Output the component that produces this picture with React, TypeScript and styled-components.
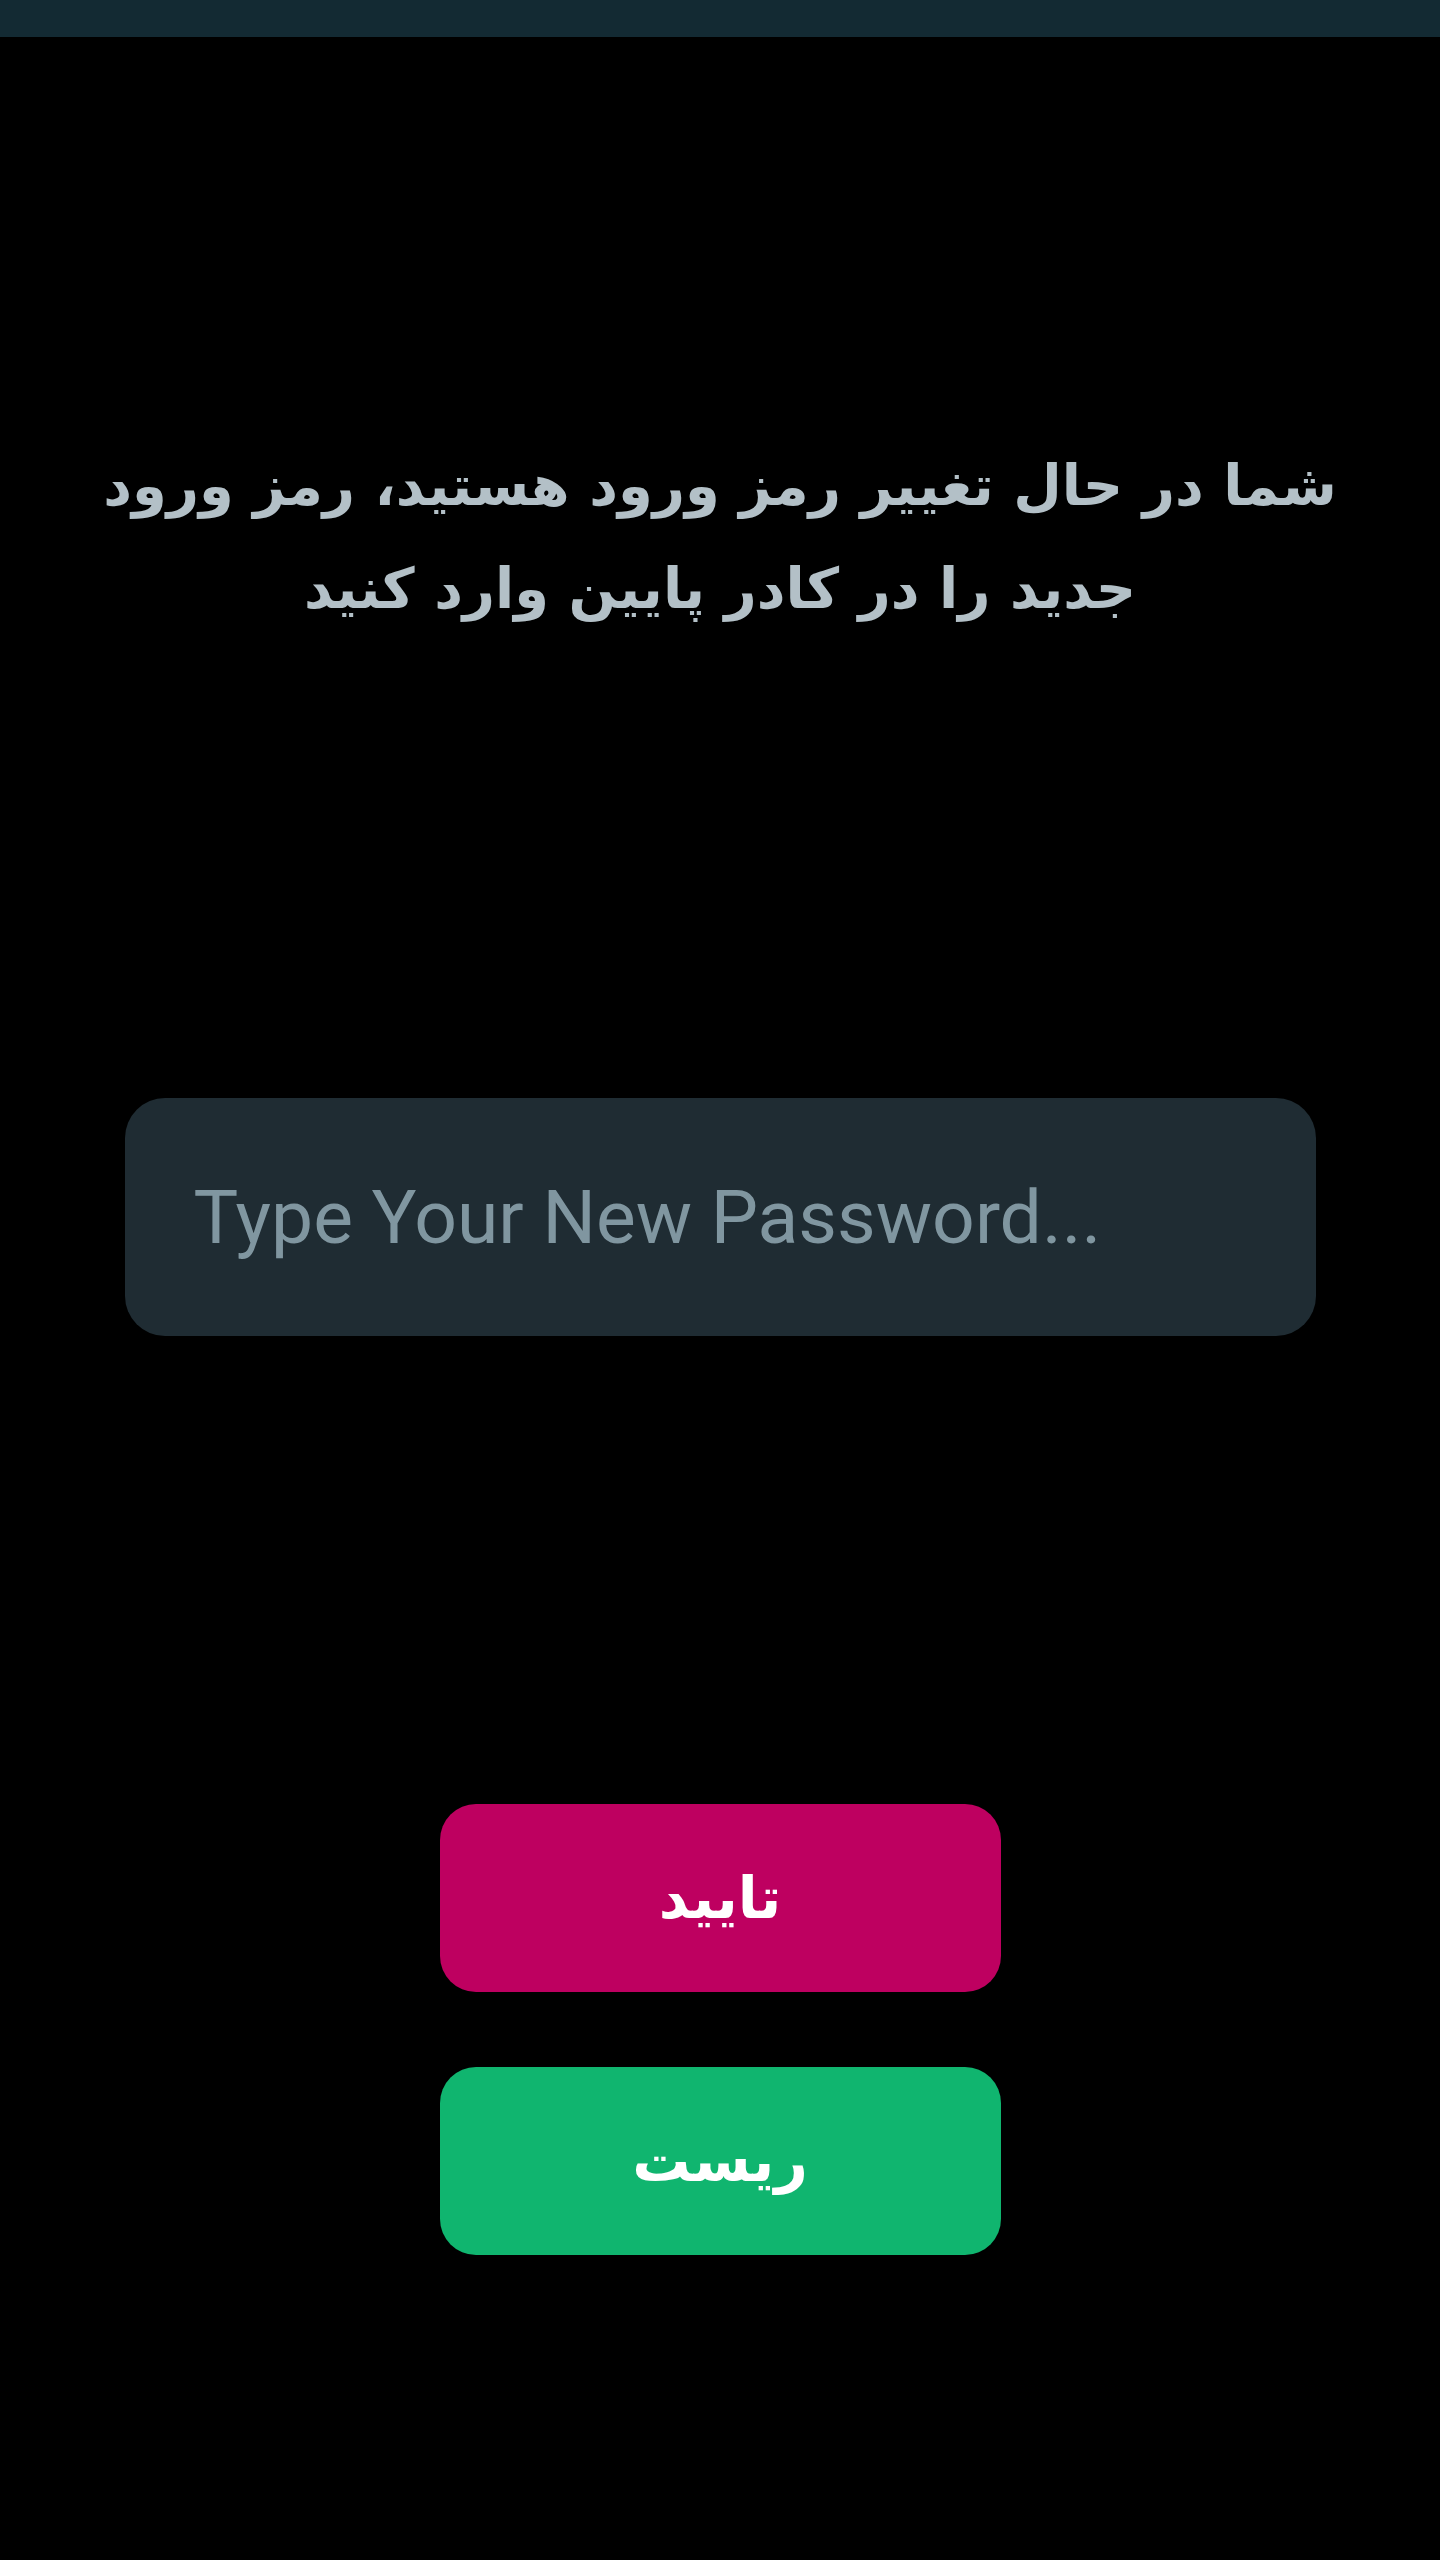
import { useState } from 'react';
import styled, { createGlobalStyle } from 'styled-components';

const GlobalStyle = createGlobalStyle`
  html, body {
    margin: 0;
    padding: 0;
    background: #000;
  }
  * {
    box-sizing: border-box;
  }
`;

// Layout
const Screen = styled.div`
  display: flex;
  flex-direction: column;
  align-items: center;
  min-height: 2560px;
  width: 100%;
  background: #000;
`;

const StatusBar = styled.div`
  align-self: stretch;
  height: 37px;
  background: #132a33;
`;

const Notice = styled.h1`
  margin: 397px 0 0;
  width: 1300px;
  text-align: center;
  direction: rtl;
  font-family: 'DejaVu Sans', 'Noto Sans', sans-serif;
  font-weight: 700;
  font-size: 56px;
  line-height: 103px;
  color: #b3c0c7;
`;

const PasswordInput = styled.input`
  margin-top: 458px;
  width: 1191px;
  height: 238px;
  padding: 0 69px;
  border: none;
  outline: none;
  border-radius: 40px;
  background: #1f2c33;
  color: #e9edef;
  font-family: Roboto, 'Liberation Sans', sans-serif;
  font-size: 75px;

  &::placeholder {
    color: #8096a0;
  }
`;

const Actions = styled.div`
  display: flex;
  flex-direction: column;
  gap: 75px;
  margin-top: 468px;
`;

const ActionButton = styled.button<{ $color: string }>`
  width: 561px;
  height: 188px;
  border: none;
  border-radius: 36px;
  background: ${props => props.$color};
  color: #fff;
  direction: rtl;
  font-family: 'DejaVu Sans', 'Noto Sans', sans-serif;
  font-weight: 700;
  font-size: 58px;
  cursor: pointer;

  &:active {
    filter: brightness(0.9);
  }
`;

export default function App() {
  const [password, setPassword] = useState('');

  return (
    <Screen>
      <GlobalStyle />
      <StatusBar />
      <Notice>
        شما در حال تغییر رمز ورود هستید، رمز ورود
        <br />
        جدید را در کادر پایین وارد کنید
      </Notice>
      <PasswordInput
        type="password"
        placeholder="Type Your New Password..."
        value={password}
        onChange={e => setPassword(e.target.value)}
      />
      <Actions>
        <ActionButton $color="#be0060">تایید</ActionButton>
        <ActionButton $color="#10b56f" onClick={() => setPassword('')}>
          ریست
        </ActionButton>
      </Actions>
    </Screen>
  );
}
